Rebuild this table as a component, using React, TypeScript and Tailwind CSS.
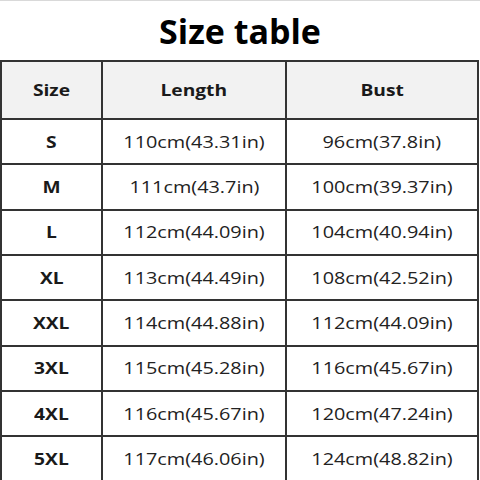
import React from "react";

const rows: [string, string, string][] = [
  ["S", "110cm(43.31in)", "96cm(37.8in)"],
  ["M", "111cm(43.7in)", "100cm(39.37in)"],
  ["L", "112cm(44.09in)", "104cm(40.94in)"],
  ["XL", "113cm(44.49in)", "108cm(42.52in)"],
  ["XXL", "114cm(44.88in)", "112cm(44.09in)"],
  ["3XL", "115cm(45.28in)", "116cm(45.67in)"],
  ["4XL", "116cm(45.67in)", "120cm(47.24in)"],
  ["5XL", "117cm(46.06in)", "124cm(48.82in)"],
];

function Head({ children }: { children: React.ReactNode }) {
  return (
    <div className="h-[56px] bg-[#f2f2f2] flex items-center justify-center">
      <span className="inline-block text-[16px] font-bold scale-x-[1.2]">{children}</span>
    </div>
  );
}

function Cell({ children, bold }: { children: React.ReactNode; bold?: boolean }) {
  return (
    <div className="h-[43.33px] bg-white flex items-center justify-center">
      {bold ? (
        <span className="inline-block text-[16px] font-bold scale-x-[1.2]">{children}</span>
      ) : (
        <span className="inline-block text-[16px] text-[#222222] scale-x-[1.24]">{children}</span>
      )}
    </div>
  );
}

export default function App() {
  return (
    <div
      className="w-[480px] h-[480px] overflow-hidden bg-white text-[#1a1a1a]"
      style={{ fontFamily: '"Open Sans", "Noto Sans", sans-serif' }}
    >
      <div className="h-[60px] border-t border-[#d9d9d9] flex items-center justify-center">
        <span className="text-[34px] font-bold text-black leading-none">Size table</span>
      </div>
      <div className="w-[479px] bg-[#333333] p-[2px] pb-0 grid grid-cols-[99px_182px_190px] gap-[2px]">
        <Head>Size</Head>
        <Head>Length</Head>
        <Head>Bust</Head>
        {rows.map(([s, l, b]) => (
          <React.Fragment key={s}>
            <Cell bold>{s}</Cell>
            <Cell>{l}</Cell>
            <Cell>{b}</Cell>
          </React.Fragment>
        ))}
      </div>
    </div>
  );
}
